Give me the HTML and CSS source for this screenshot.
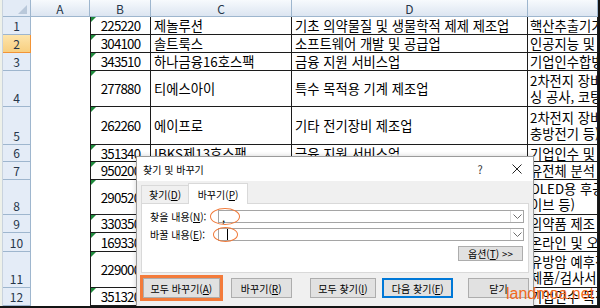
FILE: index.html
```html
<!DOCTYPE html>
<html lang="ko">
<head>
  <meta charset="UTF-8">
  <meta name="viewport" content="width=device-width, initial-scale=1.0">
  <title>찾기 및 바꾸기</title>
  <link rel="stylesheet" href="styles.css">
</head>
<body>
  <div class="screen">
    <div class="edge"></div>
    <div class="sheet">
      <div class="corner"></div>
      <div class="ch">A</div>
      <div class="ch">B</div>
      <div class="ch">C</div>
      <div class="ch">D</div>
      <div class="ch"></div>

      <div class="rh">1</div><div class="c a"></div><div class="c num">225220</div><div class="c">제놀루션</div><div class="c">기초 의약물질 및 생물학적 제제 제조업</div><div class="c e">핵산추출기기</div>
      <div class="rh sel">2</div><div class="c a"></div><div class="c num">304100</div><div class="c">솔트룩스</div><div class="c">소프트웨어 개발 및 공급업</div><div class="c e">인공지능 및</div>
      <div class="rh">3</div><div class="c a"></div><div class="c num">343510</div><div class="c">하나금융16호스팩</div><div class="c">금융 지원 서비스업</div><div class="c e">기업인수합병</div>
      <div class="rh">4</div><div class="c a"></div><div class="c num">277880</div><div class="c">티에스아이</div><div class="c">특수 목적용 기계 제조업</div><div class="c e wrap"><span>2차전지 장비</span><span>싱 공사, 코팅</span></div>
      <div class="rh">5</div><div class="c a"></div><div class="c num">262260</div><div class="c">에이프로</div><div class="c">기타 전기장비 제조업</div><div class="c e wrap"><span>2차전지 장비</span><span>충방전기 등)</span></div>
      <div class="rh">6</div><div class="c a"></div><div class="c num">351340</div><div class="c">IBKS제13호스팩</div><div class="c">금융 지원 서비스업</div><div class="c e">기업인수 및</div>
      <div class="rh">7</div><div class="c a"></div><div class="c num">950200</div><div class="c">소마젠</div><div class="c">자연과학 및 공학 연구개발업</div><div class="c e">유전체 분석</div>
      <div class="rh">8</div><div class="c a"></div><div class="c num">290520</div><div class="c">신도기연</div><div class="c">특수 목적용 기계 제조업</div><div class="c e wrap"><span>OLED용 후공정</span><span>이브 등)</span></div>
      <div class="rh">9</div><div class="c a"></div><div class="c num">330350</div><div class="c">위더스제약</div><div class="c">의약품 제조업</div><div class="c e">의약품 제조</div>
      <div class="rh">10</div><div class="c a"></div><div class="c num">169330</div><div class="c">엠브레인</div><div class="c">기타 전문 서비스업</div><div class="c e">온라인 및 오프라인</div>
      <div class="rh">11</div><div class="c a"></div><div class="c num">229000</div><div class="c">젠큐릭스</div><div class="c">자연과학 및 공학 연구개발업</div><div class="c e wrap"><span>유방암 예후진단</span><span>제품/검사서비스</span></div>
      <div class="rh">12</div><div class="c a"></div><div class="c num">351320</div><div class="c">하나금융15호스팩</div><div class="c">금융 지원 서비스업</div><div class="c e">기업인수 목적</div>
    </div>

    <div class="dialog">
      <div class="titlebar">
        <span class="title">찾기 및 바꾸기</span>
        <span class="help">?</span>
        <svg class="close" width="10" height="10" viewBox="0 0 10 10"><path d="M0.5 0.5L9.5 9.5M9.5 0.5L0.5 9.5" stroke="#222" stroke-width="1"/></svg>
      </div>
      <div class="dbody">
        <div class="tabs">
          <div class="tab">찾기(<u>D</u>)</div>
          <div class="tab on">바꾸기(<u>P</u>)</div>
        </div>
        <div class="panel">
          <div class="field">
            <span class="label">찾을 내용(<u>N</u>):</span>
            <div class="combo">
              <span class="val">,</span>
              <span class="drop"><svg width="9" height="6" viewBox="0 0 9 6"><path d="M0.5 0.5L4.5 4.5L8.5 0.5" fill="none" stroke="#6d6d6d" stroke-width="1"/></svg></span>
            </div>
          </div>
          <div class="field">
            <span class="label">바꿀 내용(<u>E</u>):</span>
            <div class="combo">
              <span class="caret"></span>
              <span class="drop"><svg width="9" height="6" viewBox="0 0 9 6"><path d="M0.5 0.5L4.5 4.5L8.5 0.5" fill="none" stroke="#6d6d6d" stroke-width="1"/></svg></span>
            </div>
          </div>
          <div class="optrow">
            <button class="btn opt">옵션(<u>T</u>) &gt;&gt;</button>
          </div>
        </div>
        <div class="actions">
          <button class="btn all marked">모두 바꾸기(<u>A</u>)</button>
          <button class="btn one">바꾸기(<u>R</u>)</button>
          <button class="btn findall">모두 찾기(<u>I</u>)</button>
          <button class="btn next">다음 찾기(<u>F</u>)</button>
          <button class="btn close-btn">닫기</button>
        </div>
      </div>
      <span class="ring r1"></span>
      <span class="ring r2"></span>
    </div>

    <div class="watermark">landmoa.net</div>
  </div>
</body>
</html>
```

FILE: styles.css
```css
* {
  box-sizing: border-box;
}
body {
  margin: 0;
  background: #fff;
  font-family: "Noto Sans CJK KR", "Noto Sans", sans-serif;
}
.screen {
  position: relative;
  display: flex;
  width: 600px;
  height: 308px;
  overflow: hidden;
  border-right: 2px solid #141414;
  border-bottom: 2px solid #141414;
}
.edge {
  width: 3px;
  background: #eef1ea;
  border-right: 1px solid #c9d3de;
}

/* sheet */
.sheet {
  display: grid;
  grid-template-columns: 28px 59px 61px 141px 236px 70px;
  grid-template-rows: 17px 18px 18px 18px 36px 38px 17px 18px 35px 18px 19px 36px 18px;
  font-size: 13.3px;
  color: #000;
}
.corner {
  position: relative;
  background: #e3ebf6;
  border-right: 1px solid #9eb6ce;
  border-bottom: 1px solid #9eb6ce;
}
.corner::after {
  content: "";
  position: absolute;
  right: 3px;
  bottom: 2px;
  border-left: 9px solid transparent;
  border-bottom: 9px solid #b9c8da;
}
.ch {
  display: flex;
  align-items: center;
  justify-content: center;
  background: linear-gradient(#f7fafd, #dce5f1);
  border-right: 1px solid #9eb6ce;
  border-bottom: 1px solid #9eb6ce;
  font-size: 12px;
  color: #26364a;
}
.rh {
  display: flex;
  align-items: flex-end;
  justify-content: center;
  background: #e4ecf7;
  border-right: 1px solid #9eb6ce;
  border-bottom: 1px solid #9eb6ce;
  font-size: 12px;
  line-height: 17px;
  color: #26364a;
}
.rh.sel {
  background: linear-gradient(#fde4ab, #f8cf80);
  border-color: #f29436;
}
.c {
  position: relative;
  display: flex;
  align-items: center;
  padding: 0 3px;
  white-space: nowrap;
  overflow: hidden;
  border-right: 1px solid #1c1c1c;
  border-bottom: 1px solid #1c1c1c;
}
.c.a {
  border: none;
}
.num {
  justify-content: center;
  border-left: 1px solid #1c1c1c;
  letter-spacing: -0.8px;
}
.num::before {
  content: "";
  position: absolute;
  top: 0;
  left: 0;
  border-top: 5px solid #1e8a3c;
  border-right: 5px solid transparent;
}
.e {
  padding-left: 2px;
}
.e.wrap {
  flex-direction: column;
  align-items: flex-start;
  justify-content: center;
  line-height: 16px;
}

/* dialog */
.dialog {
  position: absolute;
  left: 136px;
  top: 156px;
  width: 398px;
  height: 160px;
  background: #f0f0f0;
  border: 1px solid #9b9b9b;
  box-shadow: 0 0 5px rgba(0, 0, 0, 0.18);
  font-size: 10px;
  color: #000;
}
.titlebar {
  display: flex;
  align-items: center;
  height: 24px;
  padding-left: 6px;
  background: #fff;
}
.help {
  margin-left: auto;
  width: 10px;
  text-align: center;
  font-size: 11px;
  color: #333;
}
.close {
  margin-left: 27px;
  margin-right: 11px;
}
.dbody {
  padding: 2px 4px 0 4px;
}
.tabs {
  display: flex;
  align-items: flex-end;
  height: 20px;
}
.tab {
  display: flex;
  align-items: center;
  justify-content: center;
  width: 48px;
  height: 18px;
  background: #f0f0f0;
  border: 1px solid #d9d9d9;
  border-bottom: none;
}
.tab.on {
  position: relative;
  z-index: 1;
  width: 60px;
  height: 21px;
  margin-bottom: -1px;
  margin-left: -1px;
  background: #fff;
}
.panel {
  height: 70px;
  padding: 6px 4px 0 8px;
  background: #fff;
  border: 1px solid #d9d9d9;
}
.field {
  display: flex;
  align-items: center;
  height: 13px;
  margin-bottom: 5px;
}
.label {
  width: 68px;
  white-space: nowrap;
}
.combo {
  display: flex;
  align-items: center;
  flex: 1;
  height: 13px;
  padding-left: 3px;
  border: 1px solid #a5a5a5;
  background: #fff;
}
.val {
  font-size: 11px;
  line-height: 10px;
}
.caret {
  width: 1px;
  height: 11px;
  margin-left: 5px;
  background: #000;
}
.drop {
  display: flex;
  align-items: center;
  justify-content: center;
  width: 13px;
  height: 11px;
  margin-left: auto;
  border-left: 1px solid #dcdcdc;
}
.optrow {
  display: flex;
  justify-content: flex-end;
  margin-top: 3px;
}
.btn {
  height: 20px;
  padding: 0;
  background: #e1e1e1;
  border: 1px solid #adadad;
  font-family: inherit;
  font-size: 10px;
  color: #000;
}
.btn.opt {
  width: 65px;
  height: 15px;
  line-height: 12px;
  margin-right: 1px;
}
.actions {
  display: flex;
  margin-top: 5px;
  padding-left: 2px;
}
.all {
  width: 77px;
}
.marked {
  outline: 3px solid #f37b3b;
}
.one {
  width: 61px;
  margin-left: 11px;
}
.findall {
  width: 67px;
  margin-left: 18px;
}
.next {
  width: 71px;
  margin-left: 6px;
  border-color: #0078d7;
  box-shadow: inset 0 0 0 1px #0078d7;
}
.close-btn {
  width: 61px;
  margin-left: 15px;
}
.ring {
  position: absolute;
  border: 1.5px solid #f07a3a;
  border-radius: 50%;
}
.r1 {
  left: 73px;
  top: 51px;
  width: 30px;
  height: 17px;
}
.r2 {
  left: 76px;
  top: 70px;
  width: 25px;
  height: 15px;
}

.watermark {
  position: absolute;
  left: 506px;
  top: 286px;
  font-family: "Liberation Sans", Arial, sans-serif;
  font-size: 16px;
  line-height: 16px;
  color: #f26a20;
}
```
